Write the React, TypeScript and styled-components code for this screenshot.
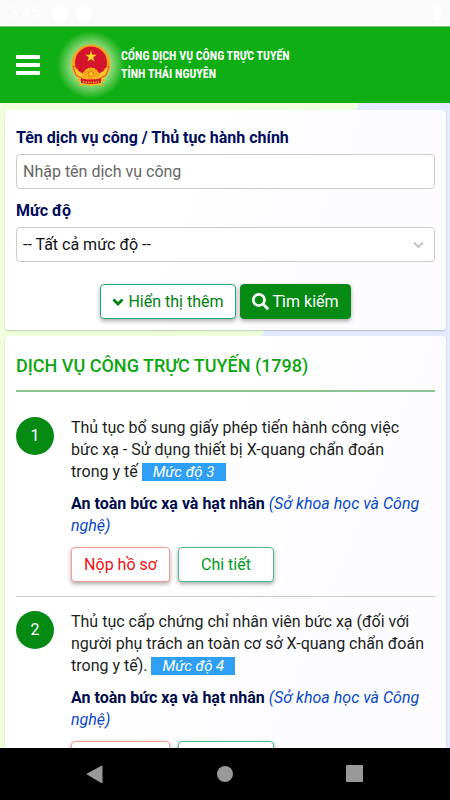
import React from "react";
import styled, { createGlobalStyle } from "styled-components";
import { FaSearch } from "react-icons/fa";

const GlobalStyle = createGlobalStyle`
  *, *::before, *::after { box-sizing: border-box; }
  body { margin: 0; color: #1c1f22; font-family: Roboto, "Noto Sans", sans-serif; font-size: 16px; line-height: 22px; }
  button, input, select { font: inherit; }
`;

const Screen = styled.div`
  display: flex;
  flex-direction: column;
  height: 100vh;
  overflow: hidden;
`;

const StatusBar = styled.div`
  display: flex;
  align-items: center;
  gap: 8px;
  flex: none;
  height: 27px;
  padding: 0 9px;
  background: #fafafa;
  color: #fff;
  border-bottom: 1px solid #7fc082;
`;

const Clock = styled.span`
  margin-right: 4px;
`;

const StatusDot = styled.span`
  width: 16px;
  height: 16px;
  border-radius: 50%;
  background: #fff;
`;

const Battery = styled.span`
  width: 8px;
  height: 14px;
  margin-left: auto;
  border-radius: 2px;
  background: #fff;
`;

const Header = styled.header`
  display: flex;
  align-items: center;
  flex: none;
  height: 76px;
  padding: 0 16px;
  background: #0eae14;
  color: #fff;
`;

const MenuButton = styled.button`
  display: flex;
  padding: 0;
  border: 0;
  background: none;
  color: inherit;
  cursor: pointer;
`;

const Brand = styled.a`
  display: flex;
  align-items: center;
  margin-left: 17px;
  color: inherit;
  text-decoration: none;
`;

const Glow = styled.span`
  display: flex;
  align-items: center;
  justify-content: center;
  width: 68px;
  height: 68px;
  margin-right: -4px;
  background: radial-gradient(closest-side, #d8f3c0 40%, #84d570 62%, rgba(14, 174, 20, 0) 100%);
`;

const BrandName = styled.span`
  display: block;
  font-family: "Roboto Condensed", "Liberation Sans Narrow", Roboto, sans-serif;
  font-size: 12px;
  font-weight: 700;
  line-height: 18px;
  white-space: nowrap;
`;

const Content = styled.main`
  flex: 1;
  min-height: 0;
  overflow: hidden;
  display: flex;
  flex-direction: column;
  gap: 6px;
  padding: 7px 4px 0 5px;
  background: linear-gradient(112.5deg, #f0ffdc 50%, #e6eaff 50%);
`;

const Card = styled.section`
  flex: none;
  padding: 11px;
  border-radius: 4px;
  background: linear-gradient(112.5deg, #fff 40%, #fcfcff 70%);
  box-shadow: 0 1px 2px rgba(0, 0, 0, 0.2);
`;

const SearchForm = styled.form`
  display: flex;
  flex-direction: column;
  margin-top: 6px;
`;

const Label = styled.label`
  margin-bottom: 5px;
  color: #000c5c;
  font-weight: 700;
`;

const TextInput = styled.input`
  width: 100%;
  height: 35px;
  margin-bottom: 11px;
  padding: 0 6px;
  border: 1px solid #ccc;
  border-radius: 4px;
  background: #fff;
  outline: none;
  &::placeholder { color: #666; opacity: 1; }
`;

const SelectWrap = styled.div`
  display: grid;
  align-items: center;
  > * { grid-area: 1 / 1; }
  > svg { justify-self: end; margin-right: 11px; pointer-events: none; }
`;

const Select = styled.select`
  appearance: none;
  width: 100%;
  height: 35px;
  padding: 0 6px;
  border: 1px solid #ccc;
  border-radius: 4px;
  background: #fff;
  color: #111;
`;

const FormActions = styled.div`
  display: flex;
  justify-content: center;
  gap: 4px;
  margin-top: 22px;
`;

const tones = {
  more: { fg: "#008010", bg: "#fff", line: "#18ad7c" },
  solid: { fg: "#fff", bg: "#058a14", line: "#058a14" },
  red: { fg: "#f01010", bg: "#fff", line: "#fa9c92" },
  green: { fg: "#009a1c", bg: "#fff", line: "#4ebd85" },
};

const Button = styled.button<{ $tone: keyof typeof tones }>`
  display: inline-flex;
  align-items: center;
  justify-content: center;
  gap: 4px;
  height: 35px;
  padding: 0 11px;
  border: 1px solid ${(p) => tones[p.$tone].line};
  border-radius: 4px;
  background: ${(p) => tones[p.$tone].bg};
  color: ${(p) => tones[p.$tone].fg};
  box-shadow: 0 2px 4px rgba(0, 0, 0, 0.35);
  white-space: nowrap;
  cursor: pointer;
`;

const ListTitle = styled.h2`
  margin: 8px 0 0;
  padding-bottom: 13px;
  border-bottom: 2px solid #8fc293;
  color: #0ba50f;
  font-size: 18px;
  font-weight: 500;
  line-height: 22px;
`;

const List = styled.ol`
  margin: 25px 0 0;
  padding: 0;
  list-style: none;
`;

const Item = styled.li`
  display: flex;
  align-items: flex-start;
  gap: 17px;
  margin-bottom: 14px;
  padding: 0 0 14px;
  border-bottom: 1px solid #ccc;
`;

const Index = styled.span`
  display: flex;
  align-items: center;
  justify-content: center;
  flex: none;
  width: 38px;
  height: 38px;
  border-radius: 50%;
  background: #058a14;
  color: #fff;
`;

const ItemBody = styled.div`
  flex: 1;
  min-width: 0;
`;

const Text = styled.p`
  margin: 0 0 10px;
  padding-right: 8px;
`;

const Level = styled.em`
  display: inline-block;
  height: 18px;
  padding: 0 11px;
  background: #2e9ff5;
  color: #fff;
  font-size: 15px;
  line-height: 18px;
`;

const Field = styled.strong`
  color: #000c4c;
  font-weight: 700;
`;

const Agency = styled.em`
  color: #0a48c4;
`;

const ItemActions = styled.div`
  display: grid;
  grid-template-columns: 99px 96px;
  gap: 8px;
`;

const NavBar = styled.nav`
  display: flex;
  align-items: center;
  justify-content: center;
  gap: 112px;
  flex: none;
  height: 52px;
  background: #000;
`;

const NavButton = styled.button`
  display: flex;
  padding: 0;
  border: 0;
  background: none;
  color: #999;
`;

const Emblem = () => (
  <svg width="42" height="43" viewBox="0 0 42 43" aria-hidden="true">
    <circle cx="21" cy="20" r="19.500" fill="#f2a51c" />
    <path d="M1.500 18Q4 28 9 32L7 38 18 36 24 36 35 38 33 32Q38 28 40.500 18L35 25 30 22 12 22 7 25Z" fill="#f7b51e" />
    <circle cx="21" cy="18.500" r="16" fill="#d4152b" />
    <path d="M21 6.500l1.300 4.200h4.400l-3.500 2.600 1.300 4.200-3.500-2.600-3.500 2.600 1.300-4.200-3.500-2.600h4.400z" fill="#ffdc28" />
    <path d="M3 22q4 1 6 5l5 3-2 4-6-3zM39 22q-4 1-6 5l-5 3 2 4 6-3z" fill="#ffc928" stroke="#d4152b" strokeWidth=".6" />
    <path d="M13 32a8 8 0 0 1 16 0l1 2H12z" fill="#f5a81b" stroke="#ffd52a" strokeWidth="1" strokeDasharray="2 1" />
    <circle cx="21" cy="30" r="2.500" fill="#ffc928" stroke="#d97b10" />
    <path d="M11 34q10 3 20 0v5q-10 2-20 0z" fill="#d4152b" />
    <path d="M13 37.500q8 2 16 0" fill="none" stroke="#f5a81b" strokeWidth="1.500" strokeDasharray="1.500 1" />
    <path d="M10 39l-1 3 6-1 6 1 6-1 6 1-1-3q-11 2-22 0z" fill="#f7b51e" />
  </svg>
);

const services = [
  {
    name: "Thủ tục bổ sung giấy phép tiến hành công việc bức xạ - Sử dụng thiết bị X-quang chẩn đoán trong\u00a0y\u00a0tế",
    level: "Mức độ 3",
  },
  {
    name: "Thủ tục cấp chứng chỉ nhân viên bức xạ (đối với người phụ trách an toàn cơ sở X-quang chẩn đoán trong\u00a0y\u00a0tế).",
    level: "Mức độ 4",
  },
];

export default function App() {
  return (
    <Screen>
      <GlobalStyle />
      <StatusBar>
        <Clock>3:45</Clock>
        <StatusDot />
        <StatusDot />
        <Battery />
      </StatusBar>
      <Header>
        <MenuButton type="button" aria-label="Menu">
          <svg width="24" height="22" viewBox="0 0 24 22" fill="currentColor">
            <rect y="1" width="24" height="4" rx="1" />
            <rect y="9" width="24" height="4" rx="1" />
            <rect y="17" width="24" height="4" rx="1" />
          </svg>
        </MenuButton>
        <Brand href="#">
          <Glow>
            <Emblem />
          </Glow>
          <BrandName>
            CỔNG DỊCH VỤ CÔNG TRỰC TUYẾN
            <br />
            TỈNH THÁI NGUYÊN
          </BrandName>
        </Brand>
      </Header>
      <Content>
        <Card>
          <SearchForm onSubmit={(e) => e.preventDefault()}>
            <Label htmlFor="service">Tên dịch vụ công / Thủ tục hành chính</Label>
            <TextInput id="service" type="text" placeholder="Nhập tên dịch vụ công" />
            <Label htmlFor="level">Mức độ</Label>
            <SelectWrap>
              <Select id="level">
                <option>-- Tất cả mức độ --</option>
                <option>Mức độ 3</option>
                <option>Mức độ 4</option>
              </Select>
              <svg width="11" height="8" viewBox="0 0 11 8" fill="none" stroke="#c4c4c4" strokeWidth="2">
                <path d="M1 1.500 5.500 6 10 1.500" />
              </svg>
            </SelectWrap>
            <FormActions>
              <Button type="button" $tone="more">
                <svg width="12" height="8" viewBox="0 0 12 8" fill="none" stroke="currentColor" strokeWidth="2.800">
                  <path d="M1.500 1.500 6 6 10.500 1.500" />
                </svg>
                Hiển thị thêm
              </Button>
              <Button type="submit" $tone="solid">
                <FaSearch size={17} />
                Tìm kiếm
              </Button>
            </FormActions>
          </SearchForm>
        </Card>
        <Card>
          <ListTitle>DỊCH VỤ CÔNG TRỰC TUYẾN (1798)</ListTitle>
          <List>
            {services.map((service, i) => (
              <Item key={service.level}>
                <Index>{i + 1}</Index>
                <ItemBody>
                  <Text>
                    {service.name} <Level>{service.level}</Level>
                  </Text>
                  <Text>
                    <Field>An toàn bức xạ và hạt nhân</Field> <Agency>(Sở khoa học và Công nghệ)</Agency>
                  </Text>
                  <ItemActions>
                    <Button type="button" $tone="red">Nộp hồ sơ</Button>
                    <Button type="button" $tone="green">Chi tiết</Button>
                  </ItemActions>
                </ItemBody>
              </Item>
            ))}
          </List>
        </Card>
      </Content>
      <NavBar>
        <NavButton type="button" aria-label="Back">
          <svg width="18" height="18" viewBox="0 0 18 18" fill="currentColor">
            <path d="M1 9 16 1v17z" stroke="currentColor" strokeLinejoin="round" />
          </svg>
        </NavButton>
        <NavButton type="button" aria-label="Home">
          <svg width="18" height="18" viewBox="0 0 18 18" fill="currentColor">
            <circle cx="9" cy="9" r="8" />
          </svg>
        </NavButton>
        <NavButton type="button" aria-label="Recent apps">
          <svg width="18" height="18" viewBox="0 0 18 18" fill="currentColor">
            <rect width="17" height="17" rx="1" />
          </svg>
        </NavButton>
      </NavBar>
    </Screen>
  );
}
